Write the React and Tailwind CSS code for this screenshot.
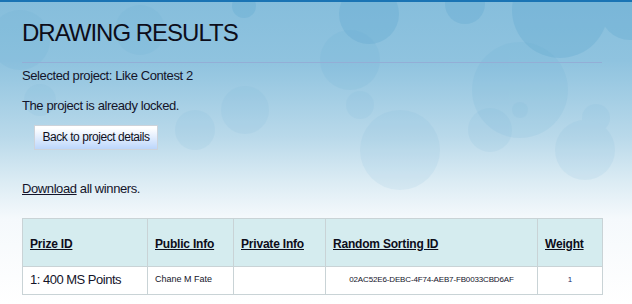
import React from "react";

function Background() {
  return (
    <svg className="absolute inset-0 w-full h-full" width="632" height="304" viewBox="0 0 632 304" preserveAspectRatio="none">
      <defs>
        <linearGradient id="bg" x1="0" y1="0" x2="0" y2="1">
          <stop offset="0" stopColor="#86bedc" />
          <stop offset="0.2" stopColor="#8fc3df" />
          <stop offset="0.45" stopColor="#b9d9ea" />
          <stop offset="0.6" stopColor="#dcecf4" />
          <stop offset="0.72" stopColor="#f5f9fc" />
          <stop offset="1" stopColor="#ffffff" />
        </linearGradient>
      </defs>
      <rect width="632" height="304" fill="url(#bg)" />
      <g fill="#4f9fcc" opacity="0.22">
        <circle cx="369" cy="14" r="30" />
        <circle cx="465" cy="4" r="20" />
        <circle cx="560" cy="10" r="48" />
        <circle cx="630" cy="10" r="30" />
        <circle cx="244" cy="6" r="12" />
      </g>
      <g fill="#5aa6d0" opacity="0.1">
        <circle cx="520" cy="90" r="48" />
        <circle cx="350" cy="60" r="30" />
        <circle cx="20" cy="40" r="30" />
        <circle cx="140" cy="30" r="25" />
      </g>
      <g fill="#6fb0d6" opacity="0.1">
        <circle cx="360" cy="105" r="14" />
        <circle cx="490" cy="130" r="22" />
        <circle cx="596" cy="118" r="14" />
        <circle cx="585" cy="150" r="30" />
        <circle cx="400" cy="150" r="40" />
        <circle cx="245" cy="110" r="24" />
        <circle cx="40" cy="100" r="16" />
        <circle cx="195" cy="130" r="20" />
        <circle cx="520" cy="110" r="8" />
      </g>
      <rect x="0" y="0" width="632" height="2" fill="#1a74b4" />
    </svg>
  );
}

export default function App() {
  const font = { fontFamily: '"Liberation Sans", Arial, sans-serif' };
  return (
    <div className="relative w-[632px] h-[304px] overflow-hidden bg-white" style={font}>
      <Background />
      <div className="relative flex flex-col pl-[22px] pr-[30px] text-[#14142a]">
        <h1 className="mt-[21px] text-[24px] leading-[24px] tracking-[-1px] text-[#0d0d1a]">DRAWING RESULTS</h1>
        <div className="mt-[17px] h-px w-[580px] bg-[#93aed6]" />
        <p className="mt-[5px] text-[13px] leading-[15px] tracking-[-0.4px]">Selected project: Like Contest 2</p>
        <p className="mt-[15px] text-[13px] leading-[15px] tracking-[-0.4px]">The project is already locked.</p>
        <div className="mt-[11px] pl-[12px]">
          <button className="h-[25px] w-[124px] border border-[#cdd3da] bg-gradient-to-b from-[#ffffff] from-[10%] to-[#bcd6fb] text-[12px] tracking-[-0.45px] text-[#101020]">
            Back to project details
          </button>
        </div>
        <p className="mt-[31px] text-[13px] leading-[15px] tracking-[-0.4px]">
          <span className="underline">Download</span> all winners.
        </p>
        <table className="mt-[22px] w-[580px] border-collapse table-fixed text-left">
          <colgroup>
            <col className="w-[125px]" />
            <col className="w-[86px]" />
            <col className="w-[92px]" />
            <col className="w-[212px]" />
            <col className="w-[65px]" />
          </colgroup>
          <thead>
            <tr className="h-[48px] bg-[#d5ecef]">
              {["Prize ID", "Public Info", "Private Info", "Random Sorting ID", "Weight"].map((h) => (
                <th key={h} className="border border-[#c9d3d6] px-[7px] pt-[4px] text-[12px] tracking-[-0.2px] font-bold text-[#0d0d1a] align-middle">
                  <span className="underline">{h}</span>
                </th>
              ))}
            </tr>
          </thead>
          <tbody>
            <tr className="h-[28px] bg-white">
              <td className="border border-[#c9d3d6] px-[7px] text-[13px] tracking-[-0.5px] text-[#14142a]">1: 400 MS Points</td>
              <td className="border border-[#c9d3d6] px-[7px] text-[9px] text-[#14142a]">Chane M Fate</td>
              <td className="border border-[#c9d3d6] px-[7px]"></td>
              <td className="border border-[#c9d3d6] px-[7px] text-center text-[8px] tracking-[-0.15px] text-[#14142a]">02AC52E6-DEBC-4F74-AEB7-FB0033CBD6AF</td>
              <td className="border border-[#c9d3d6] px-[7px] text-center text-[8px] text-[#1a2a6a]">1</td>
            </tr>
          </tbody>
        </table>
      </div>
    </div>
  );
}
